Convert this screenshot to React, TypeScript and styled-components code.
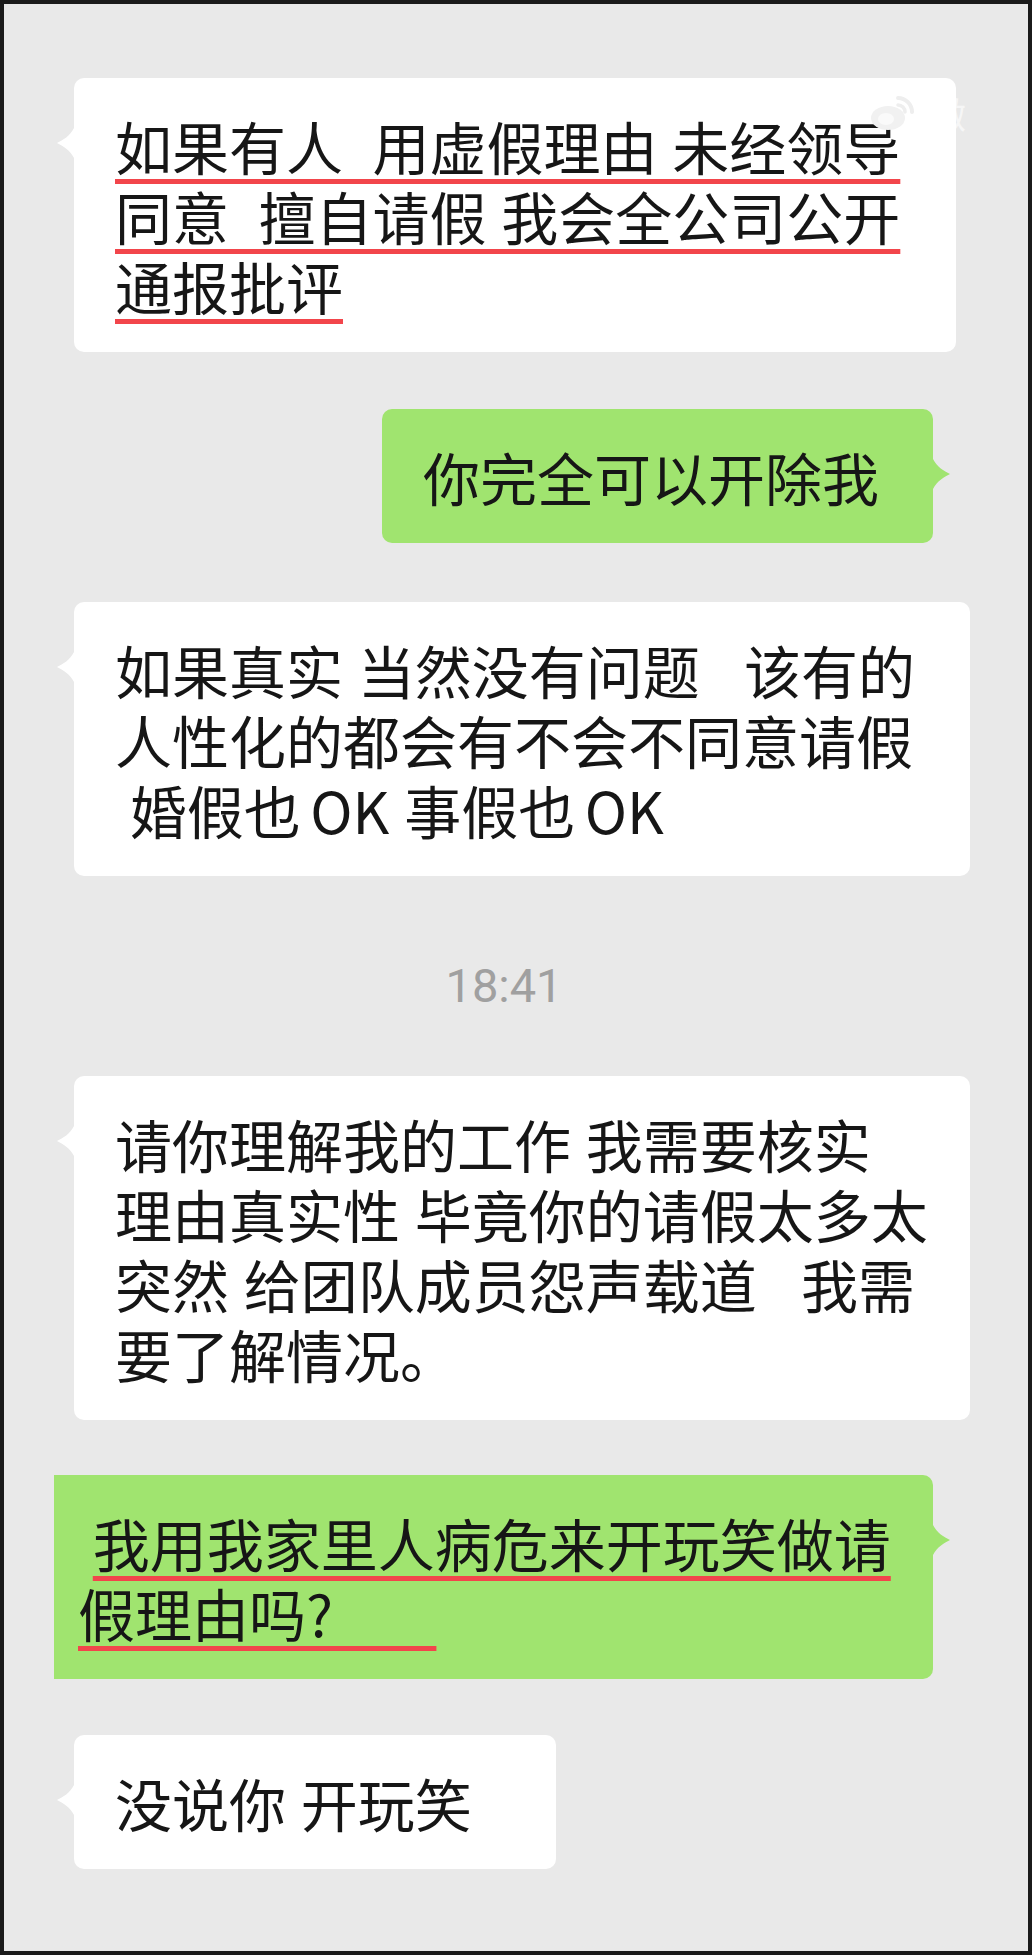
import React from 'react';
import styled, { createGlobalStyle } from 'styled-components';

const GlobalStyle = createGlobalStyle`
  html, body {
    margin: 0;
    padding: 0;
    background: #1b1b1b;
  }
  body {
    font-family: "Noto Sans CJK SC", "Noto Sans", sans-serif;
  }
`;

type Side = 'left' | 'right';

const Frame = styled.div`
  position: relative;
  width: 1032px;
  height: 1955px;
  box-sizing: border-box;
  border: 4px solid #1b1b1b;
  background: #e9e9e9;
  overflow: hidden;
`;

const Thread = styled.div`
  display: flex;
  flex-direction: column;
  padding-top: 74px;
`;

const Row = styled.div<{ $side: Side; $top: number }>`
  display: flex;
  justify-content: ${(p) => (p.$side === 'left' ? 'flex-start' : 'flex-end')};
  padding: ${(p) => (p.$side === 'left' ? '0 0 0 70px' : '0 95px 0 0')};
  margin-top: ${(p) => p.$top}px;
`;

const Bubble = styled.div<{ $side: Side; $w: number; $pad?: number; $flat?: boolean }>`
  position: relative;
  box-sizing: border-box;
  width: ${(p) => p.$w}px;
  padding: 32px 0 32px ${(p) => p.$pad ?? 41}px;
  background: ${(p) => (p.$side === 'left' ? '#ffffff' : '#a0e46f')};
  border-radius: ${(p) => (p.$flat ? '0 10px 10px 0' : '10px')};
  color: #161616;
  font-size: 57px;
  line-height: 70px;
  word-spacing: 2px;

  &::before {
    content: '';
    position: absolute;
    top: 50px;
    ${(p) => (p.$side === 'left' ? 'left: -17px;' : 'right: -17px;')}
    width: 17px;
    height: 30px;
    background: ${(p) => (p.$side === 'left' ? '#ffffff' : '#a0e46f')};
    clip-path: ${(p) =>
      p.$side === 'left'
        ? "path('M17 0 C13 8 6 12 0 15 C6 18 13 22 17 30 Z')"
        : "path('M0 0 C4 8 11 12 17 15 C11 18 4 22 0 30 Z')"};
  }
`;

const Line = styled.span`
  display: block;
  white-space: pre;
`;

const Marked = styled.span`
  text-decoration: underline;
  text-decoration-color: #f2454b;
  text-decoration-thickness: 5px;
  text-underline-offset: 9px;
  text-decoration-skip-ink: none;
`;

const TimeRow = styled.div`
  display: flex;
  justify-content: center;
  padding-right: 24px;
  margin-top: 82px;
`;

const Time = styled.span`
  font-family: Roboto, "Noto Sans", sans-serif;
  font-size: 47px;
  line-height: 56px;
  color: #a0a0a0;
`;

const Watermark = styled.div`
  position: absolute;
  top: 88px;
  left: 864px;
  display: flex;
  align-items: center;
  gap: 12px;
`;

const WatermarkText = styled.span`
  font-size: 36px;
  line-height: 40px;
  color: rgba(255, 255, 255, 0.6);
`;

const WeiboMark = () => (
  <svg width="50" height="42" viewBox="0 0 50 42" fill="none">
    <ellipse cx="20" cy="26" rx="17" ry="12" fill="#f1f1f1" />
    <ellipse cx="18" cy="27" rx="8" ry="6" fill="#fafafa" />
    <path d="M30 6 A14 14 0 0 1 44 20" stroke="#eeeeee" strokeWidth="4" strokeLinecap="round" />
    <path d="M30 13 A7 7 0 0 1 37 20" stroke="#eeeeee" strokeWidth="3.5" strokeLinecap="round" />
  </svg>
);

const App: React.FC = () => {
  return (
    <Frame>
      <GlobalStyle />
      <Thread>
        <Row $side="left" $top={0}>
          <Bubble $side="left" $w={882}>
            <Line><Marked>如果有人  用虚假理由 未经领导</Marked></Line>
            <Line><Marked>同意  擅自请假 我会全公司公开</Marked></Line>
            <Line><Marked>通报批评</Marked></Line>
          </Bubble>
        </Row>

        <Row $side="right" $top={57}>
          <Bubble $side="right" $w={551}>
            <Line>你完全可以开除我</Line>
          </Bubble>
        </Row>

        <Row $side="left" $top={59}>
          <Bubble $side="left" $w={896}>
            <Line>如果真实 当然没有问题   该有的</Line>
            <Line>人性化的都会有不会不同意请假</Line>
            <Line>{' 婚假也\u2006OK 事假也\u2006OK'}</Line>
          </Bubble>
        </Row>

        <TimeRow>
          <Time>18:41</Time>
        </TimeRow>

        <Row $side="left" $top={62}>
          <Bubble $side="left" $w={896}>
            <Line>请你理解我的工作 我需要核实</Line>
            <Line>理由真实性 毕竟你的请假太多太</Line>
            <Line>突然 给团队成员怨声载道   我需</Line>
            <Line>要了解情况。</Line>
          </Bubble>
        </Row>

        <Row $side="right" $top={55}>
          <Bubble $side="right" $w={879} $pad={24} $flat>
            <Line> <Marked>我用我家里人病危来开玩笑做请</Marked></Line>
            <Line><Marked>{'假理由吗?\u00a0\u00a0\u00a0\u00a0\u00a0\u00a0\u00a0'}</Marked></Line>
          </Bubble>
        </Row>

        <Row $side="left" $top={56}>
          <Bubble $side="left" $w={482}>
            <Line>没说你 开玩笑</Line>
          </Bubble>
        </Row>
      </Thread>

      <Watermark>
        <WeiboMark />
        <WatermarkText>微</WatermarkText>
      </Watermark>
    </Frame>
  );
};

export default App;
